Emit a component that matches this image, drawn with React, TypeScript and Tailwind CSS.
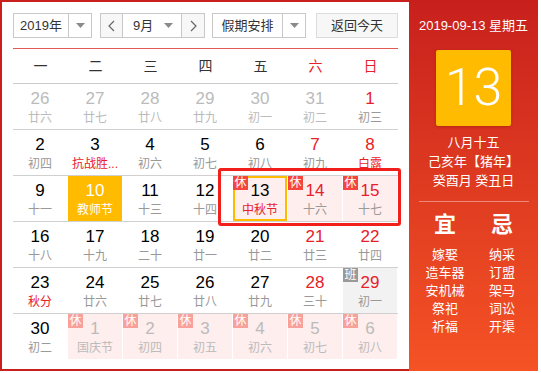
import React from 'react';

type Cell = {
  d: string;
  l: string;
  dim?: boolean;
  redNum?: boolean;
  redLunar?: boolean;
  rest?: 'on' | 'dim';
  work?: boolean;
  today?: boolean;
  selected?: boolean;
};

const rows: Cell[][] = [
  [
    { d: '26', l: '廿六', dim: true },
    { d: '27', l: '廿七', dim: true },
    { d: '28', l: '廿八', dim: true },
    { d: '29', l: '廿九', dim: true },
    { d: '30', l: '初一', dim: true },
    { d: '31', l: '初二', dim: true },
    { d: '1', l: '初三', redNum: true },
  ],
  [
    { d: '2', l: '初四' },
    { d: '3', l: '抗战胜...', redLunar: true },
    { d: '4', l: '初六' },
    { d: '5', l: '初七' },
    { d: '6', l: '初八' },
    { d: '7', l: '初九', redNum: true },
    { d: '8', l: '白露', redNum: true, redLunar: true },
  ],
  [
    { d: '9', l: '十一' },
    { d: '10', l: '教师节', today: true },
    { d: '11', l: '十三' },
    { d: '12', l: '十四' },
    { d: '13', l: '中秋节', redLunar: true, rest: 'on', selected: true },
    { d: '14', l: '十六', redNum: true, rest: 'on' },
    { d: '15', l: '十七', redNum: true, rest: 'on' },
  ],
  [
    { d: '16', l: '十八' },
    { d: '17', l: '十九' },
    { d: '18', l: '二十' },
    { d: '19', l: '廿一' },
    { d: '20', l: '廿二' },
    { d: '21', l: '廿三', redNum: true },
    { d: '22', l: '廿四', redNum: true },
  ],
  [
    { d: '23', l: '秋分', redLunar: true },
    { d: '24', l: '廿六' },
    { d: '25', l: '廿七' },
    { d: '26', l: '廿八' },
    { d: '27', l: '廿九' },
    { d: '28', l: '三十', redNum: true },
    { d: '29', l: '初一', redNum: true, work: true },
  ],
  [
    { d: '30', l: '初二' },
    { d: '1', l: '国庆节', dim: true, rest: 'dim' },
    { d: '2', l: '初四', dim: true, rest: 'dim' },
    { d: '3', l: '初五', dim: true, rest: 'dim' },
    { d: '4', l: '初六', dim: true, rest: 'dim' },
    { d: '5', l: '初七', dim: true, rest: 'dim' },
    { d: '6', l: '初八', dim: true, rest: 'dim' },
  ],
];

const weekdays = ['一', '二', '三', '四', '五', '六', '日'];
const yi = ['嫁娶', '造车器', '安机械', '祭祀', '祈福'];
const ji = ['纳采', '订盟', '架马', '词讼', '开渠'];

function Caret() {
  return (
    <svg width="9" height="5" viewBox="0 0 9 5">
      <path d="M0 0 L9 0 L4.5 5 Z" fill="#8a8a8a" />
    </svg>
  );
}

function Chevron({ right }: { right?: boolean }) {
  return (
    <svg width="7" height="12" viewBox="0 0 7 12">
      <path
        d={right ? 'M1 1 L6 6 L1 11' : 'M6 1 L1 6 L6 11'}
        fill="none"
        stroke="#666"
        strokeWidth="1.2"
      />
    </svg>
  );
}

function DayCell({ c }: { c: Cell }) {
  let bg = '';
  if (c.today) bg = 'bg-[#ffbb00]';
  else if (c.rest) bg = 'bg-[#feeeed]';
  else if (c.work) bg = 'bg-[#f2f2f2]';

  let numColor = 'text-black';
  if (c.today) numColor = 'text-white';
  else if (c.dim) numColor = 'text-[#bbbbbb]';
  else if (c.redNum) numColor = 'text-[#e8202a]';

  let lunarColor = 'text-[#999999]';
  if (c.today) lunarColor = 'text-white';
  else if (c.dim) lunarColor = 'text-[#bbbbbb]';
  else if (c.redLunar) lunarColor = 'text-[#e8202a]';

  return (
    <div className="w-[55px] h-[45px] pr-px">
      <div
        className={`relative h-[45px] flex flex-col items-center ${bg} ${
          c.selected ? 'border-2 border-[#ffbb00]' : ''
        }`}
      >
        {c.rest && (
          <div
            className={`absolute ${c.selected ? '-top-[2px] -left-[2px]' : 'top-0 left-0'} w-[15px] h-[14px] text-[12px] leading-[14px] text-center text-white ${
              c.rest === 'on' ? 'bg-[#f5453d]' : 'bg-[#f8a19b]'
            }`}
          >
            休
          </div>
        )}
        {c.work && (
          <div className="absolute top-0 left-0 w-[15px] h-[14px] text-[12px] leading-[14px] text-center text-white bg-[#999999]">
            班
          </div>
        )}
        <div
          className={`${c.selected ? 'pt-[3px]' : 'pt-[5px]'} text-[17px] leading-[20px] ${numColor}`}
        >
          {c.d}
        </div>
        <div className={`text-[12px] leading-[16px] mt-px whitespace-nowrap ${lunarColor}`}>{c.l}</div>
      </div>
    </div>
  );
}

export default function App() {
  return (
    <div className="flex w-[538px] h-[371px] bg-white font-['Liberation_Sans','Noto_Sans_CJK_SC',sans-serif]">
      {/* calendar body */}
      <div className="w-[409px] h-[371px] border-l-2 border-t-2 border-b-2 border-[#c9201e] pt-[11px] px-[11px]">
        {/* toolbar */}
        <div className="flex h-[25px] text-[13px] text-[#333]">
          <div className="w-[79px] flex border border-[#c8c8c8]">
            <div className="w-[54px] flex items-center justify-center">2019年</div>
            <div className="flex-1 flex items-center justify-center border-l border-[#c8c8c8]">
              <Caret />
            </div>
          </div>
          <div className="ml-[8px] w-[105px] flex border border-[#c8c8c8]">
            <div className="w-[21px] flex items-center justify-center bg-[#f7f7f7]">
              <Chevron />
            </div>
            <div className="w-[60px] flex items-center border-l border-r border-[#c8c8c8]">
              <span className="ml-[10px]">9月</span>
              <span className="ml-auto mr-[8px] flex">
                <Caret />
              </span>
            </div>
            <div className="flex-1 flex items-center justify-center bg-[#f7f7f7]">
              <Chevron right />
            </div>
          </div>
          <div className="ml-[7px] w-[94px] flex border border-[#c8c8c8]">
            <div className="w-[69px] flex items-center justify-center">假期安排</div>
            <div className="flex-1 flex items-center justify-center border-l border-[#c8c8c8]">
              <Caret />
            </div>
          </div>
          <div className="ml-[10px] w-[82px] flex items-center justify-center border border-[#dcdcdc] bg-[#f7f7f7]">
            返回今天
          </div>
        </div>

        <div className="mt-[10px] h-px bg-[#e35a52]" />

        {/* weekday header */}
        <div className="grid grid-cols-7 h-[35px] border-b border-[#cccccc] text-[14px]">
          {weekdays.map((w, i) => (
            <div
              key={w}
              className={`flex items-center justify-center ${i >= 5 ? 'text-[#e8202a]' : 'text-[#333]'}`}
            >
              {w}
            </div>
          ))}
        </div>

        {/* days */}
        <div className="relative">
          {rows.map((r, i) => (
            <div
              key={i}
              className={`grid grid-cols-7 ${i < rows.length - 1 ? 'h-[46px] border-b border-[#d0d0d0]' : 'h-[45px]'}`}
            >
              {r.map((c, j) => (
                <DayCell key={j} c={c} />
              ))}
            </div>
          ))}
          {/* highlight annotation */}
          <div className="absolute left-[205px] top-[84px] w-[183px] h-[58px] border-[3px] border-[#f2201a] rounded-[3px] pointer-events-none" />
        </div>
      </div>

      {/* side panel */}
      <div className="w-[129px] h-[371px] bg-linear-to-b from-[#c81f1d] to-[#f55225] text-white flex flex-col items-center">
        <div className="pt-[18px] text-[13px] leading-[16px]">2019-09-13 星期五</div>
        <div className="mt-[16px] w-[75px] h-[76px] bg-[#ffbb00] rounded-[2px] shadow-[0_1px_3px_rgba(120,20,0,0.35)] flex items-center justify-center">
          <span className="text-[52px] leading-none font-light font-['Roboto',sans-serif]">13</span>
        </div>
        <div className="mt-[7px] text-[13px] leading-[19px] text-center">
          <div>八月十五</div>
          <div>己亥年【猪年】</div>
          <div>癸酉月 癸丑日</div>
        </div>
        <div className="mt-[11px] h-px w-[110px] bg-white/40" />
        <div className="mt-[9px] w-full flex pl-[8px]">
          <div className="w-[56px] flex flex-col items-center">
            <div className="text-[22px] leading-[28px] font-bold">宜</div>
            <div className="mt-[7px] text-[13px] leading-[18px] flex flex-col items-center">
              {yi.map((t) => (
                <div key={t}>{t}</div>
              ))}
            </div>
          </div>
          <div className="w-[58px] flex flex-col items-center">
            <div className="text-[22px] leading-[28px] font-bold">忌</div>
            <div className="mt-[7px] text-[13px] leading-[18px] flex flex-col items-center">
              {ji.map((t) => (
                <div key={t}>{t}</div>
              ))}
            </div>
          </div>
        </div>
      </div>
    </div>
  );
}
